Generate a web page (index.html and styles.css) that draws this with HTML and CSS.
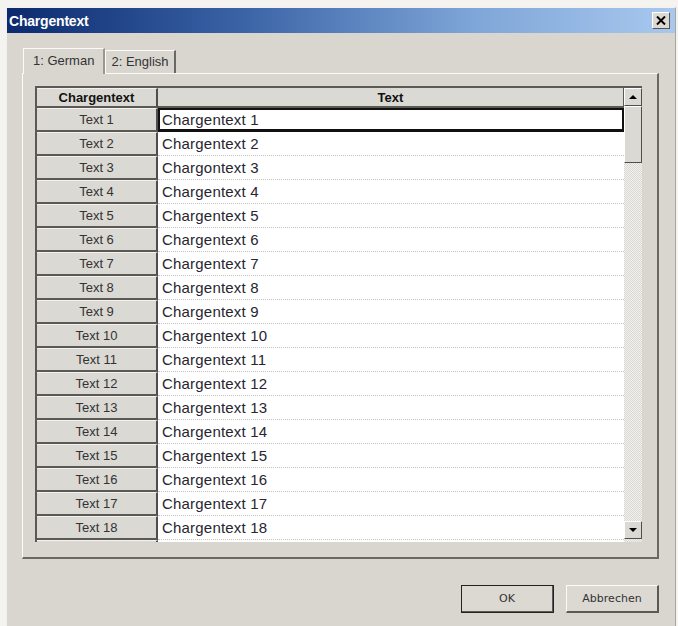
FILE: index.html
```html
<!DOCTYPE html>
<html lang="de">
<head>
  <meta charset="UTF-8">
  <title>Chargentext</title>
  <link rel="stylesheet" href="styles.css">
</head>
<body>
  <div class="window">
    <div class="titlebar">
      <span class="title">Chargentext</span>
      <button class="close-btn" aria-label="Schließen">
        <svg width="10" height="9" viewBox="0 0 10 9"><path d="M1 0.5 L9 8.5 M9 0.5 L1 8.5" stroke="#000" stroke-width="2"/></svg>
      </button>
    </div>

    <div class="content">
      <div class="tabs">
        <div class="tab active">1: German</div>
        <div class="tab">2: English</div>
      </div>

      <div class="tab-panel">
        <div class="grid">
          <div class="grid-body">
            <div class="row header">
              <div class="cell key">Chargentext</div>
              <div class="cell value">Text</div>
            </div>
            <div id="rows"></div>
          </div>
          <div class="scrollbar">
            <div class="sb-btn"><span class="arrow up"></span></div>
            <div class="sb-thumb"></div>
            <div class="sb-track"></div>
            <div class="sb-btn"><span class="arrow down"></span></div>
          </div>
        </div>
      </div>

      <div class="button-row">
        <button class="btn default">OK</button>
        <button class="btn">Abbrechen</button>
      </div>
    </div>
  </div>

  <script>
    const rows = document.getElementById('rows');
    const labels = {3: 'Chargontext 3'};

    for (let i = 1; i <= 18; i++) {
      const row = document.createElement('div');
      row.className = 'row' + (i === 1 ? ' selected' : '');
      row.innerHTML =
        '<div class="cell key">Text ' + i + '</div>' +
        '<div class="cell value">' + (labels[i] || 'Chargentext ' + i) + '</div>';
      rows.appendChild(row);
    }

    // next row peeks out below the last visible one
    const peek = document.createElement('div');
    peek.className = 'row';
    peek.innerHTML = '<div class="cell key"></div><div class="cell value"></div>';
    rows.appendChild(peek);
  </script>
</body>
</html>
```

FILE: styles.css
```css
body {
  margin: 0;
  padding: 7px 2px 0 6px;
  background: #f4f3f0;
  font-family: "Liberation Sans", Arial, sans-serif;
  overflow: hidden;
}

.window {
  height: 619px;
  background: #d9d6d0;
  border-left: 1px solid #f2f1ee;
  border-top: 1px solid #f2f1ee;
  border-right: 1px solid #a8a59f;
  display: flex;
  flex-direction: column;
}

.titlebar {
  height: 25px;
  display: flex;
  align-items: center;
  justify-content: space-between;
  padding: 0 5px 0 2px;
  background: linear-gradient(to right, #0c2a6e 0%, #3a63a6 35%, #7fa6d8 70%, #a8c8ee 100%);
}

.title {
  color: #fff;
  font-weight: bold;
  font-size: 14px;
  letter-spacing: -0.2px;
}

.close-btn {
  width: 18px;
  height: 17px;
  padding: 0;
  display: flex;
  align-items: center;
  justify-content: center;
  background: #dcd9d3;
  border: 1px solid;
  border-color: #fff #555 #555 #fff;
}

.content {
  flex: 1;
  padding: 14px 16px 0 15px;
  display: flex;
  flex-direction: column;
}

/* tabs */
.tabs {
  display: flex;
  align-items: flex-end;
  height: 26px;
  padding-left: 1px;
}

.tab {
  font-size: 13px;
  color: #333;
  white-space: nowrap;
  padding: 3px 5px 4px;
  background: #d9d6d0;
  border: 1px solid;
  border-bottom: none;
  border-color: #fafafa #6a6864 transparent #fafafa;
  border-right-width: 2px;
}

.tab.active {
  padding: 4px 9px 6px 9px;
  position: relative;
  top: 1px;
  z-index: 1;
  border-right-color: #9a9792;
}

.tab-panel {
  height: 471px;
  padding: 12px 4px 0 12px;
  border: 1px solid;
  border-color: #fafafa #6a6864 #6a6864 #fafafa;
  border-right-width: 2px;
  border-bottom-width: 2px;
}

/* grid */
.grid {
  display: flex;
  height: 456px;
  overflow: hidden;
}

.grid-body {
  width: 587px;
  background: #fff;
  border-left: 2px solid #5a5955;
  border-top: 2px solid #5a5955;
}

.row {
  display: flex;
  height: 24px;
  flex-shrink: 0;
}

.row.header {
  height: 20px;
}

.cell {
  display: flex;
  align-items: center;
  box-sizing: border-box;
}

.cell.key {
  width: 121px;
  justify-content: center;
  font-size: 13px;
  color: #333;
  background: #dbd9d4;
  border-right: 2px solid #4f4e4b;
  border-bottom: 2px solid #5a5955;
  border-top: 1px solid #f2f1ee;
}

.cell.value {
  flex: 1;
  padding-left: 4px;
  font-size: 15px;
  letter-spacing: 0.2px;
  color: #262630;
  border-bottom: 1px dotted #c4c4c4;
}

.row.header .cell {
  font-weight: bold;
  font-size: 13px;
  letter-spacing: 0;
  color: #111;
  background: #dbd9d4;
  border-bottom: 2px solid #5a5955;
  justify-content: center;
}

.row.header .cell.value {
  padding-left: 0;
  border-right: 1px solid #5a5955;
}

.row.selected .cell.value {
  border: 2px solid #111;
  border-bottom-width: 3px;
  padding-left: 2px;
}

/* scrollbar */
.scrollbar {
  width: 18px;
  display: flex;
  flex-direction: column;
  border-top: 2px solid #5a5955;
  background: repeating-conic-gradient(#f2f1ee 0 25%, #dad8d3 0 50%) 0 0 / 2px 2px;
}

.sb-btn {
  height: 18px;
  flex-shrink: 0;
  display: flex;
  align-items: center;
  justify-content: center;
  box-sizing: border-box;
  background: #dbd9d4;
  border: 1px solid;
  border-color: #fff #4f4e4b #4f4e4b #fff;
}

.sb-btn:last-child {
  margin-bottom: 3px;
}

.sb-thumb {
  height: 57px;
  flex-shrink: 0;
  box-sizing: border-box;
  background: #dbd9d4;
  border: 1px solid;
  border-color: #fff #4f4e4b #4f4e4b #fff;
}

.sb-track {
  flex: 1;
}

.arrow {
  width: 0;
  height: 0;
  border-left: 4px solid transparent;
  border-right: 4px solid transparent;
}

.arrow.up {
  border-bottom: 4px solid #000;
}

.arrow.down {
  border-top: 4px solid #000;
}

/* dialog buttons */
.button-row {
  display: flex;
  justify-content: flex-end;
  gap: 12px;
  margin-top: 26px;
}

.btn {
  width: 93px;
  height: 28px;
  font-family: "DejaVu Sans", sans-serif;
  font-size: 11px;
  color: #333;
  background: #dcd9d3;
  border: 1px solid;
  border-color: #fafafa #5a5955 #5a5955 #fafafa;
  border-right-width: 2px;
  border-bottom-width: 2px;
}

.btn.default {
  outline: 1px solid #222;
  outline-offset: -1px;
}
```
